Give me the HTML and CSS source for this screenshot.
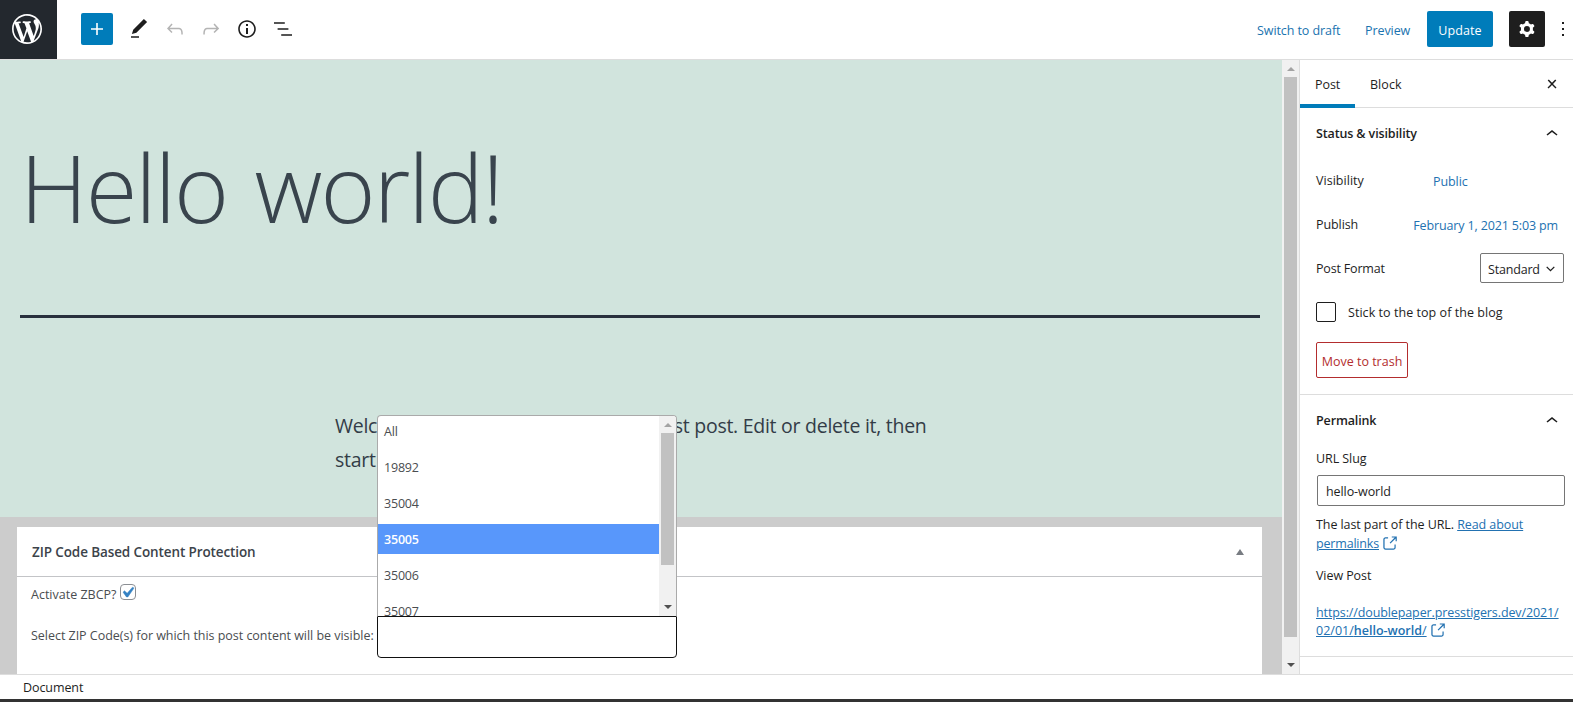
FILE: index.html
```html
<!DOCTYPE html>
<html lang="en">
<head>
<meta charset="utf-8">
<title>Edit Post</title>
<link rel="stylesheet" href="styles.css">
</head>
<body>
<div class="app">
  <header class="header">
    <div class="logo"><svg width="36" height="36" viewBox="-2 -2 24 24"><path d="M20 10c0-5.51-4.49-10-10-10C4.48 0 0 4.49 0 10c0 5.52 4.48 10 10 10 5.51 0 10-4.48 10-10zM7.78 15.37L4.37 6.22c.55-.02 1.17-.08 1.17-.08.5-.06.44-1.13-.06-1.11 0 0-1.45.11-2.37.11-.18 0-.37 0-.58-.01C4.12 2.69 6.87 1.11 10 1.11c2.33 0 4.45.87 6.05 2.34-.68-.11-1.65.39-1.65 1.58 0 .74.45 1.36.9 2.1.35.61.55 1.36.55 2.46 0 1.49-1.4 5-1.4 5l-3.03-8.37c.54-.02.82-.17.82-.17.5-.05.44-1.25-.06-1.22 0 0-1.44.12-2.38.12-.87 0-2.33-.12-2.33-.12-.5-.03-.56 1.2-.06 1.22l.92.08 1.26 3.41zM17.41 10c.24-.64.74-1.87.43-4.25.7 1.29 1.05 2.71 1.05 4.25 0 3.29-1.73 6.24-4.4 7.78.97-2.59 1.94-5.2 2.92-7.78zM6.1 18.09C3.12 16.65 1.11 13.53 1.11 10c0-1.3.23-2.48.72-3.59C3.25 10.3 4.67 14.2 6.1 18.09zm4.03-6.63l2.58 6.98c-.86.29-1.76.45-2.71.45-.79 0-1.57-.11-2.29-.33.81-2.38 1.62-4.74 2.42-7.1z"/></svg></div>
    <div class="add"><svg class="icon" viewBox="0 0 24 24"><path d="M18 11.2h-5.2V6h-1.6v5.2H6v1.6h5.2V18h1.6v-5.2H18z"/></svg></div>
    <nav class="tools">
      <span class="tool"><svg class="icon" viewBox="0 0 24 24"><path d="M20.1 5.1L16.9 2 6.2 12.7l-1.3 4.4 4.5-1.3L20.1 5.1zM4 20.8h8v-1.5H4v1.5z"/></svg></span>
      <span class="tool off"><svg class="icon" viewBox="0 0 24 24"><path d="M18.3 11.7c-.6-.6-1.4-.9-2.3-.9H6.7l2.9-3.3-1.1-1-4.5 5L8.5 16l1-1-2.7-2.7H16c.5 0 .9.2 1.3.5 1 1 1 3.4 1 4.5v.3h1.5v-.2c0-1.5 0-4.3-1.5-5.7z"/></svg></span>
      <span class="tool off"><svg class="icon" viewBox="0 0 24 24"><path d="M15.6 6.5l-1.1 1 2.9 3.3H8c-.9 0-1.7.3-2.3.9-1.4 1.5-1.4 4.2-1.4 5.6v.2h1.5v-.3c0-1.1 0-3.5 1-4.5.3-.3.7-.5 1.3-.5h9.2L14.5 15l1.1 1.1 4.6-4.6-4.6-5z"/></svg></span>
      <span class="tool"><svg class="icon" viewBox="0 0 24 24"><path d="M12 3.2c-4.8 0-8.8 3.9-8.8 8.8 0 4.8 3.9 8.8 8.8 8.8 4.8 0 8.8-3.9 8.8-8.8 0-4.8-4-8.8-8.8-8.8zm0 16c-4 0-7.2-3.3-7.2-7.2C4.8 8 8 4.8 12 4.8s7.2 3.3 7.2 7.2c0 4-3.2 7.2-7.2 7.2zM11 17h2v-6h-2v6zm0-8h2V7h-2v2z"/></svg></span>
      <span class="tool"><svg class="icon" viewBox="0 0 24 24"><path d="M13.8 5.2H3v1.5h10.8V5.2zm-3.6 12v1.5H21v-1.5H10.2zm7.2-6H6.6v1.5h10.8v-1.5z"/></svg></span>
    </nav>
    <div class="actions">
      <span class="action draft">Switch to draft</span>
      <span class="action preview">Preview</span>
      <span class="update">Update</span>
      <span class="cog"><svg class="icon" viewBox="0 0 24 24"><path fill-rule="evenodd" d="M10.289 4.836A1 1 0 0111.275 4h1.306a1 1 0 01.987.836l.244 1.466c.787.26 1.503.679 2.108 1.218l1.393-.522a1 1 0 011.216.437l.653 1.13a1 1 0 01-.23 1.273l-1.148.944a6.025 6.025 0 010 2.435l1.149.946a1 1 0 01.23 1.272l-.653 1.13a1 1 0 01-1.216.437l-1.394-.522c-.605.54-1.32.958-2.108 1.218l-.244 1.466a1 1 0 01-.987.836h-1.306a1 1 0 01-.986-.836l-.244-1.466a5.995 5.995 0 01-2.108-1.218l-1.394.522a1 1 0 01-1.217-.436l-.653-1.131a1 1 0 01.23-1.272l1.149-.946a6.026 6.026 0 010-2.435l-1.148-.944a1 1 0 01-.23-1.272l.653-1.131a1 1 0 011.217-.437l1.393.522a5.994 5.994 0 012.108-1.218l.244-1.466zM14.929 12a3 3 0 11-6 0 3 3 0 016 0z"/></svg></span>
      <span class="more"><svg class="icon" viewBox="0 0 24 24"><path d="M13 19h-2v-2h2v2zm0-6h-2v-2h2v2zm0-6h-2V5h2v2z"/></svg></span>
    </div>
  </header>

  <div class="body">
    <main class="editor">
      <section class="canvas">
        <h1 class="title">Hello world!</h1>
        <p class="paragraph">Welcome to WordPress. This is your first post. Edit or delete it, then<br>start writing!</p>
      </section>
      <section class="metaboxes">
        <div class="metabox">
          <div class="metabox-head"><h2 class="metabox-title">ZIP Code Based Content Protection</h2><svg class="toggle" width="8" height="6" viewBox="0 0 8 6"><path d="M4 0l4 6H0z"/></svg></div>
          <div class="row activate"><span class="activate-label">Activate ZBCP?</span><span class="check"><svg width="21" height="21" viewBox="0 0 20 20"><path d="M14.83 4.89l1.34.94-5.81 8.38H9.02L5.78 9.67l1.34-1.25 2.57 2.4z"/></svg></span></div>
          <div class="row zip"><span class="zip-label">Select ZIP Code(s) for which this post content will be visible:</span>
            <div class="zip-select">
              <div class="dropdown">
                <ul class="options">
                  <li class="option">All</li>
                  <li class="option">19892</li>
                  <li class="option">35004</li>
                  <li class="option selected">35005</li>
                  <li class="option">35006</li>
                  <li class="option">35007</li>
                </ul>
                <div class="scrollbar small"><svg class="arrow" viewBox="0 0 8 4"><path fill="#a3a3a3" d="M4 0l4 4H0z"/></svg><span class="thumb"></span><svg class="arrow" viewBox="0 0 8 4"><path fill="#505050" d="M0 0h8L4 4z"/></svg></div>
              </div>
            </div>
          </div>
        </div>
      </section>
    </main>
    <div class="scrollbar"><svg class="arrow" viewBox="0 0 8 4"><path fill="#a3a3a3" d="M4 0l4 4H0z"/></svg><span class="thumb"></span><svg class="arrow" viewBox="0 0 8 4"><path fill="#505050" d="M0 0h8L4 4z"/></svg></div>
    <aside class="sidebar">
      <div class="tabs"><span class="tab active">Post</span><span class="tab block">Block</span><svg class="icon close" viewBox="0 0 24 24"><path d="M13 11.9l3.3-3.4-1.1-1-3.2 3.3-3.2-3.3-1.1 1 3.3 3.4-3.5 3.6 1 1L12 13l3.5 3.5 1-1z"/></svg></div>
      <section class="panel status">
        <h2 class="panel-title"><span class="status-title">Status &amp; visibility</span><svg class="icon" viewBox="0 0 24 24"><path d="M6.5 12.4L12 8l5.5 4.4-.9 1.2L12 10l-4.5 3.6-1-1.2z"/></svg></h2>
        <div class="field"><span class="visibility">Visibility</span><a class="public">Public</a></div>
        <div class="field"><span class="publish">Publish</span><a class="date">February 1, 2021 5:03 pm</a></div>
        <div class="field"><span class="format">Post Format</span><span class="select"><span class="standard">Standard</span><svg width="9" height="6" viewBox="0 0 9 6"><path d="M.7.9l3.8 3.8L8.3.9" fill="none" stroke="#1e1e1e" stroke-width="1.3"/></svg></span></div>
        <div class="field"><span class="box"></span><span class="stick">Stick to the top of the blog</span></div>
        <span class="trash"><span class="trash-text">Move to trash</span></span>
      </section>
      <section class="panel permalink">
        <h2 class="panel-title"><span class="permalink-title">Permalink</span><svg class="icon" viewBox="0 0 24 24"><path d="M6.5 12.4L12 8l5.5 4.4-.9 1.2L12 10l-4.5 3.6-1-1.2z"/></svg></h2>
        <div class="slug-label">URL Slug</div>
        <div class="slug"><span class="slug-text">hello-world</span></div>
        <p class="help"><span class="help-text">The last part of the URL. <a>Read about</a></span><br><a class="help-link">permalinks</a> <svg class="external" viewBox="0 0 24 24"><path d="M18.2 17c0 .7-.6 1.2-1.2 1.2H7c-.7 0-1.2-.6-1.2-1.2V7c0-.7.6-1.2 1.2-1.2h3.2V4.2H7C5.5 4.2 4.2 5.5 4.2 7v10c0 1.5 1.2 2.8 2.8 2.8h10c1.5 0 2.8-1.2 2.8-2.8v-3.6h-1.5V17zM14.9 3v1.5h3.7l-6.4 6.4 1.1 1.1 6.4-6.4v3.7h1.5V3h-6.3z"/></svg></p>
        <div class="view">View Post</div>
        <p class="url"><a class="url-first">https://doublepaper.presstigers.dev/2021/</a><br><a class="url-second">02/01/<b>hello-world</b>/</a> <svg class="external" viewBox="0 0 24 24"><path d="M18.2 17c0 .7-.6 1.2-1.2 1.2H7c-.7 0-1.2-.6-1.2-1.2V7c0-.7.6-1.2 1.2-1.2h3.2V4.2H7C5.5 4.2 4.2 5.5 4.2 7v10c0 1.5 1.2 2.8 2.8 2.8h10c1.5 0 2.8-1.2 2.8-2.8v-3.6h-1.5V17zM14.9 3v1.5h3.7l-6.4 6.4 1.1 1.1 6.4-6.4v3.7h1.5V3h-6.3z"/></svg></p>
      </section>
    </aside>
  </div>
  <footer class="footer">Document</footer>
</div>
</body>
</html>
```
FILE: styles.css
```css
* { box-sizing: border-box; margin: 0; padding: 0; }
body {
  width: 1573px; height: 702px; overflow: hidden; background: #fff;
  font-family: "Open Sans", "Noto Sans", sans-serif;
  font-size: 12.5px; line-height: 18px; letter-spacing: -0.08px; color: #1e1e1e;
}
svg { display: block; flex: none; }
span, a { white-space: nowrap; }
.icon { width: 24px; height: 24px; fill: #1e1e1e; }
.app { display: flex; flex-direction: column; height: 702px; }

.header { display: flex; align-items: center; height: 60px; flex: none; padding-bottom: 1px; border-bottom: 1px solid #ddd; }
.logo { align-self: flex-start; width: 57px; height: 59px; background: #23282e; display: flex; align-items: center; padding: 0 0 1px 9px; }
.logo svg { fill: #fff; }
.add { width: 32px; height: 32px; margin: 0 8px 0 24px; background: #007cba; border-radius: 2px; display: grid; place-items: center; }
.add .icon { fill: #fff; }
.tools { display: flex; }
.tool { width: 36px; height: 36px; display: grid; place-items: center; }
.tool.off .icon { fill: #b4b4b4; }
.actions { margin-left: auto; display: flex; align-items: center; width: 316px; }
.action { flex: none; color: #1a73af; padding-top: 3px; }
.draft { width: 108px; }
.preview { width: 62px; }
.update { width: 66px; height: 36px; flex: none; padding-top: 3px; background: #007cba; color: #fff; border-radius: 2px; display: grid; place-items: center; letter-spacing: 0.1px; }
.cog { width: 36px; height: 36px; flex: none; margin-left: 16px; background: #1e1e1e; border-radius: 2px; display: grid; place-items: center; }
.cog .icon { fill: #fff; }
.more { margin-left: 6px; }

.body { display: flex; flex: none; height: 614px; }
.editor { width: 1282px; display: flex; flex-direction: column; background: #ccc; }
.canvas { height: 457px; flex: none; background: #d1e4dd; padding: 0 22px 0 20px; }
.title { height: 258px; padding: 60px 0 0 0; border-bottom: 3px solid #28303d; font-size: 94px; font-weight: 300; line-height: 134px; letter-spacing: -1.95px; word-spacing: 5px; color: #39444d; }
.paragraph { padding: 91px 0 0 315px; font-size: 19.5px; line-height: 34px; letter-spacing: -0.27px; color: #333c47; white-space: nowrap; }
.metaboxes { height: 157px; padding: 10px 20px 0 17px; }
.metabox { height: 147px; background: #fff; color: #4a4d50; }
.metabox-head { height: 50px; border-bottom: 1px solid #c3c4c7; display: flex; align-items: center; justify-content: space-between; padding: 0 18px 0 15px; }
.metabox-title { font-size: 13.5px; font-weight: 600; letter-spacing: -0.11px; color: #3c434a; }
.toggle { fill: #787c82; }
.row { display: flex; padding-left: 14px; }
.activate { height: 30px; padding-top: 9px; }
.activate-label { letter-spacing: 0; }
.check { width: 16px; height: 16px; margin: -2px 0 0 4px; border: 1px solid #8c8f94; border-radius: 4px; }
.check svg { margin: -3px 0 0 -4px; fill: #3582c4; stroke: #3582c4; stroke-width: 0.5px; }
.zip { height: 60px; padding-top: 9px; }
.zip-label { width: 346px; flex: none; padding-top: 11px; letter-spacing: -0.03px; }
.zip-select { position: relative; width: 300px; height: 42px; border: 1px solid #111; border-radius: 0 0 4px 4px; background: #fff; }
.dropdown { position: absolute; left: -1px; bottom: 40px; width: 300px; height: 202px; display: flex; background: #fff; border: 1px solid #aaa; border-bottom-color: #111; border-radius: 4px 4px 0 0; overflow: hidden; }
.options { flex: 1; list-style: none; display: flex; flex-direction: column; gap: 6px; letter-spacing: -0.2px; }
.option { height: 30px; flex: none; padding: 7px 6px 5px; }
.selected { background: #5897fb; color: #fff; font-weight: 600; }

.scrollbar { width: 17px; background: #f1f1f1; display: flex; flex-direction: column; align-items: center; padding: 7px 0; }
.arrow { width: 8px; height: 4px; }
.thumb { width: 13px; height: 560px; margin: 6px 0 auto; background: #c1c1c1; }
.small .thumb { height: 132px; }

.sidebar { width: 274px; border-left: 1px solid #ddd; background: #fff; }
.tabs { height: 48px; display: flex; align-items: center; border-bottom: 1px solid #ddd; }
.tab { height: 48px; width: 55px; padding: 16px 0 0 15px; }
.tab.active { border-bottom: 4px solid #007cba; }
.tab.block { letter-spacing: 0.05px; }
.close { margin-left: auto; margin-right: 9px; }
.panel { padding-left: 16px; border-bottom: 1px solid #ddd; }
.panel-title { display: flex; justify-content: space-between; align-items: center; font-size: 12.5px; font-weight: 600; letter-spacing: -0.13px; padding-right: 9px; }
.status { height: 287px; }
.status .panel-title { height: 51px; padding-top: 1px; }
.field { height: 44px; display: flex; align-items: center; padding-right: 9px; }
.status a { color: #2271b1; padding-top: 1px; }
.visibility { width: 117px; letter-spacing: 0.03px; }
.date { margin-left: auto; margin-right: 6px; letter-spacing: -0.14px; }
.format { letter-spacing: -0.18px; }
.select { margin: -2px 0 0 auto; width: 84px; height: 30px; border: 1px solid #757575; border-radius: 2px; display: flex; align-items: center; justify-content: space-between; padding: 3px 8px 0 7px; letter-spacing: -0.18px; }
.select svg { margin-top: -2px; }
.box { width: 20px; height: 20px; margin: -2px 12px 0 0; border: 1px solid #1e1e1e; border-radius: 2px; }
.stick { letter-spacing: 0.05px; }
.trash { display: grid; place-items: center; width: 92px; height: 36px; margin-top: 7px; padding-top: 4px; border: 1px solid #b32d2e; border-radius: 2px; color: #b32d2e; letter-spacing: 0; }
.permalink { height: 262px; }
.permalink .panel-title { height: 52px; }
.slug-label { padding-top: 3px; height: 28px; }
.slug { width: 248px; height: 31px; margin-left: 1px; padding: 7px 8px; border: 1px solid #757575; border-radius: 2px; }
.help { padding-top: 9px; height: 47px; line-height: 19px; }
.help a, .url a { color: #2271b1; text-decoration: underline; }
.help-link { letter-spacing: -0.18px; }
.external { display: inline-block; width: 19px; height: 19px; margin: -4px 0 -4px -2px; vertical-align: -1px; fill: #2271b1; }
.view { padding-top: 14px; }
.url { padding-top: 19px; letter-spacing: -0.11px; }
.url-second { letter-spacing: 0; }
.url b { font-weight: 600; }
.footer { height: 28px; flex: none; border-top: 1px solid #ddd; border-bottom: 3px solid #333; padding: 4px 0 0 23px; }
```
